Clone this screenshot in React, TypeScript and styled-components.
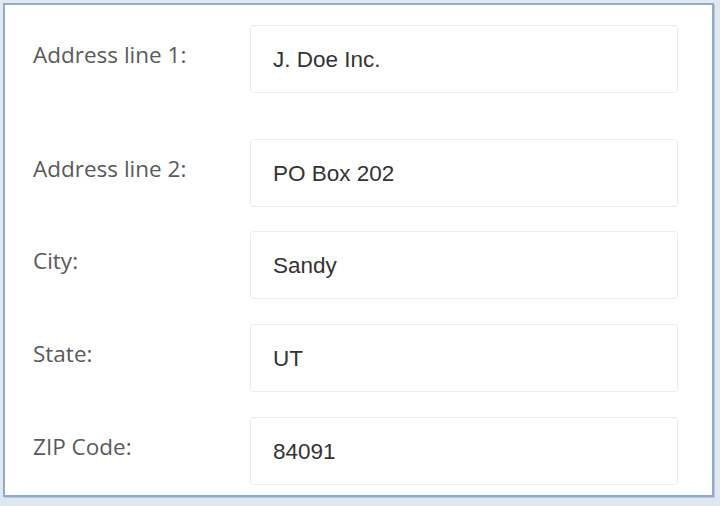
import React from "react";
import styled, { createGlobalStyle } from "styled-components";

const GlobalStyle = createGlobalStyle`
  html, body {
    margin: 0;
    padding: 0;
    background: #dfe7f1;
  }
  * {
    box-sizing: border-box;
  }
`;

const fields = [
  { label: "Address line 1:", value: "J. Doe Inc.", gap: 0 },
  { label: "Address line 2:", value: "PO Box 202", gap: 46 },
  { label: "City:", value: "Sandy", gap: 24 },
  { label: "State:", value: "UT", gap: 25 },
  { label: "ZIP Code:", value: "84091", gap: 25 },
];

export default function App() {
  return (
    <>
      <GlobalStyle />
      <Page>
        <Frame>
          {fields.map((f) => (
            <Row key={f.label} $gap={f.gap}>
              <Label>{f.label}</Label>
              <Input type="text" defaultValue={f.value} readOnly />
            </Row>
          ))}
        </Frame>
      </Page>
    </>
  );
}

const Page = styled.div`
  width: 720px;
  height: 506px;
  padding: 3px 6px 9px 3px;
`;

const Frame = styled.div`
  height: 494px;
  background: #ffffff;
  border: 2px solid #93a9c8;
  box-shadow: 1px 1px 0 #b9c8dc;
  padding: 20px 32px 0 28px;
  display: flex;
  flex-direction: column;
`;

const Row = styled.div<{ $gap: number }>`
  display: flex;
  align-items: flex-start;
  margin-top: ${(p) => p.$gap}px;
`;

const Label = styled.div`
  width: 217px;
  flex-shrink: 0;
  padding-top: 15px;
  font-family: "Open Sans", "Noto Sans", sans-serif;
  font-size: 22.5px;
  line-height: 30px;
  color: #5a5a5a;
`;

const Input = styled.input`
  width: 428px;
  height: 68px;
  padding: 2px 0 0 22px;
  border: 1px solid #ececec;
  border-radius: 3px;
  background: #ffffff;
  font-family: "Liberation Sans", Arial, sans-serif;
  font-size: 22.5px;
  color: #333333;
  outline: none;
`;
